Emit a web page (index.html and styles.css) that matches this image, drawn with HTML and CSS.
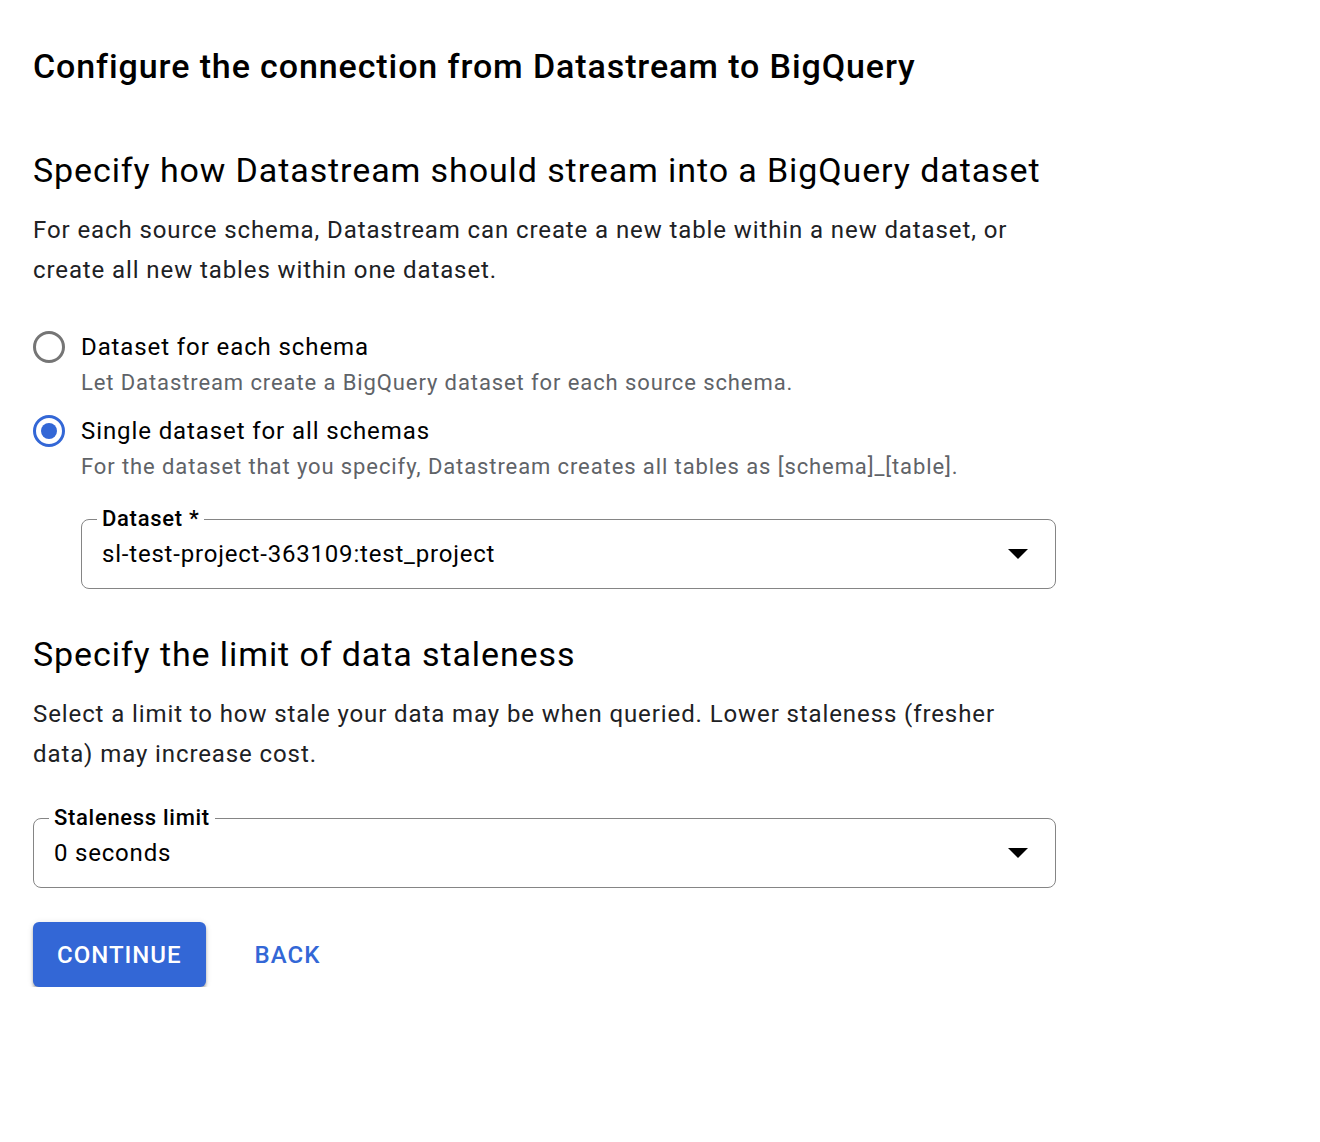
FILE: index.html
```html
<!DOCTYPE html>
<html>
<head>
<meta charset="utf-8">
<link rel="stylesheet" href="styles.css">
</head>
<body>
<main class="page">
  <h1 class="title">Configure the connection from Datastream to BigQuery</h1>

  <section class="section">
    <h2 class="heading">Specify how Datastream should stream into a BigQuery dataset</h2>
    <p class="text">For each source schema, Datastream can create a new table within a new dataset, or create all new tables within one dataset.</p>

    <div class="radios">
      <div class="radio">
        <span class="radio-btn"></span>
        <div class="radio-body">
          <div class="radio-label">Dataset for each schema</div>
          <div class="radio-desc">Let Datastream create a BigQuery dataset for each source schema.</div>
        </div>
      </div>
      <div class="radio">
        <span class="radio-btn checked"></span>
        <div class="radio-body">
          <div class="radio-label">Single dataset for all schemas</div>
          <div class="radio-desc">For the dataset that you specify, Datastream creates all tables as [schema]_[table].</div>
        </div>
      </div>
    </div>

    <fieldset class="field field-indent">
      <legend class="field-label">Dataset *</legend>
      <div class="field-row">
        <span class="field-value">sl-test-project-363109:test_project</span>
        <span class="arrow"></span>
      </div>
    </fieldset>
  </section>

  <section class="section">
    <h2 class="heading">Specify the limit of data staleness</h2>
    <p class="text">Select a limit to how stale your data may be when queried. Lower staleness (fresher data) may increase cost.</p>

    <fieldset class="field">
      <legend class="field-label">Staleness limit</legend>
      <div class="field-row">
        <span class="field-value">0 seconds</span>
        <span class="arrow"></span>
      </div>
    </fieldset>
  </section>

  <div class="actions">
    <button class="btn btn-primary">CONTINUE</button>
    <button class="btn btn-text">BACK</button>
  </div>
</main>
</body>
</html>
```

FILE: styles.css
```css
html, body {
  margin: 0;
  padding: 0;
  background: #ffffff;
}

body {
  font-family: Roboto, "Noto Sans", "Liberation Sans", sans-serif;
  color: #202124;
  letter-spacing: 0.9px;
}

.page {
  padding: 44px 0 0 33px;
  width: 1023px;
}

.title {
  margin: 0;
  font-size: 34px;
  line-height: 44px;
  font-weight: 500;
  color: #000;
}

.heading {
  margin: 58px 0 0;
  font-size: 34px;
  line-height: 48px;
  font-weight: 400;
  color: #000;
}

.section + .section .heading {
  margin-top: 41px;
}

.text {
  margin: 16px 0 0;
  font-size: 24px;
  line-height: 40px;
  color: #202124;
  max-width: 990px;
}

.radios {
  margin-top: 41px;
  display: flex;
  flex-direction: column;
  gap: 12px;
}

.radio {
  display: flex;
  gap: 16px;
  align-items: flex-start;
}

.radio-btn {
  flex: none;
  box-sizing: border-box;
  width: 32px;
  height: 32px;
  border: 3px solid #757575;
  border-radius: 50%;
  position: relative;
}

.radio-btn.checked {
  border-color: #3367d6;
}

.radio-btn.checked::after {
  content: "";
  position: absolute;
  left: 5px;
  top: 5px;
  width: 16px;
  height: 16px;
  border-radius: 50%;
  background: #3367d6;
}

.radio-label {
  font-size: 24px;
  line-height: 32px;
  color: #000;
}

.radio-desc {
  font-size: 22px;
  line-height: 40px;
  color: #5f6368;
}

.field {
  margin: 21px 0 0;
  padding: 0 18px 18px 15px;
  border: 1.5px solid #858585;
  border-radius: 8px;
  min-width: 0;
}

.field-indent {
  margin-left: 48px;
}

.field-label {
  padding: 0 5px;
  font-size: 22px;
  line-height: 22px;
  font-weight: 500;
  letter-spacing: 0.7px;
  color: #000;
}

.field-row {
  display: flex;
  align-items: center;
  justify-content: space-between;
  height: 32px;
  margin-top: 8px;
  padding-left: 5px;
}

.field-value {
  font-size: 24px;
  letter-spacing: 0.8px;
  color: #000;
}

.arrow {
  width: 0;
  height: 0;
  border-left: 10px solid transparent;
  border-right: 10px solid transparent;
  border-top: 10px solid #000;
  margin-right: 9px;
}

.section + .section .field {
  margin-top: 33px;
}

.actions {
  margin-top: 34px;
  display: flex;
  align-items: center;
  gap: 25px;
}

.btn {
  font-family: Roboto, "Noto Sans", "Liberation Sans", sans-serif;
  font-size: 24px;
  font-weight: 500;
  letter-spacing: 1px;
  border: none;
  cursor: pointer;
}

.btn-primary {
  background: #3367d6;
  color: #fff;
  height: 65px;
  padding: 0 24px;
  border-radius: 6px;
  box-shadow: 0 3px 3px rgba(0, 0, 0, 0.28), 0 1px 6px rgba(0, 0, 0, 0.12);
}

.btn-text {
  background: transparent;
  color: #3367d6;
  padding: 0 24px;
  height: 65px;
}
```
